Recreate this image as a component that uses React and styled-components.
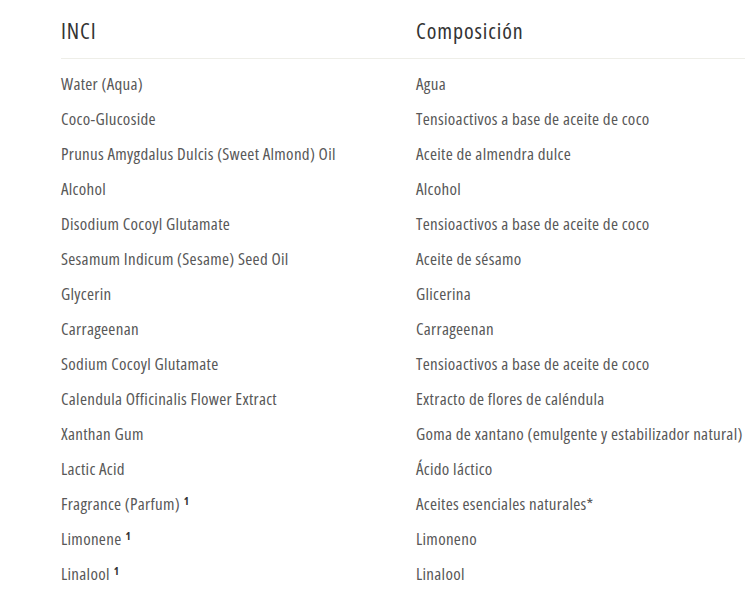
import React from 'react';
import styled, { createGlobalStyle } from 'styled-components';

const rows = [
    { inci: 'Water (Aqua)', comp: 'Agua' },
    { inci: 'Coco-Glucoside', comp: 'Tensioactivos a base de aceite de coco' },
    { inci: 'Prunus Amygdalus Dulcis (Sweet Almond) Oil', comp: 'Aceite de almendra dulce' },
    { inci: 'Alcohol', comp: 'Alcohol' },
    { inci: 'Disodium Cocoyl Glutamate', comp: 'Tensioactivos a base de aceite de coco' },
    { inci: 'Sesamum Indicum (Sesame) Seed Oil', comp: 'Aceite de sésamo' },
    { inci: 'Glycerin', comp: 'Glicerina' },
    { inci: 'Carrageenan', comp: 'Carrageenan' },
    { inci: 'Sodium Cocoyl Glutamate', comp: 'Tensioactivos a base de aceite de coco' },
    { inci: 'Calendula Officinalis Flower Extract', comp: 'Extracto de flores de caléndula' },
    { inci: 'Xanthan Gum', comp: 'Goma de xantano (emulgente y estabilizador natural)' },
    { inci: 'Lactic Acid', comp: 'Ácido láctico' },
    { inci: 'Fragrance (Parfum)', note: '1', comp: 'Aceites esenciales naturales*' },
    { inci: 'Limonene', note: '1', comp: 'Limoneno' },
    { inci: 'Linalool', note: '1', comp: 'Linalool' },
];

const GlobalStyle = createGlobalStyle`
  body {
    margin: 0;
    background: #fff;
    font-family: "Open Sans", "Liberation Sans", Arial, sans-serif;
    font-stretch: condensed;
  }
`;

const Page = styled.div`
  padding: 13px 10px 0 61px;
`;

const Table = styled.table`
  width: 684px;
  border-collapse: collapse;
  table-layout: fixed;
`;

const HeadCell = styled.th`
  text-align: left;
  font-weight: normal;
  font-size: 22px;
  letter-spacing: 0.9px;
  line-height: 26px;
  color: #333;
  padding: 4px 0 15px;
  border-bottom: 1px solid #eeeee8;
  width: ${(props) => props.width || 'auto'};
`;

const Row = styled.tr`
  &:first-child td {
    padding-top: 15px;
  }
`;

const Cell = styled.td`
  font-size: 17px;
  letter-spacing: 0.3px;
  line-height: 19px;
  color: #585858;
  padding: 8px 0;
  white-space: nowrap;
`;

const Note = styled.sup`
  font-size: 11px;
  font-weight: bold;
  color: #333;
  margin-left: 4px;
  vertical-align: 5px;
  line-height: 0;
`;

const App = () => (
    <Page>
        <GlobalStyle />
        <Table>
            <thead>
                <tr>
                    <HeadCell width="355px">INCI</HeadCell>
                    <HeadCell>Composición</HeadCell>
                </tr>
            </thead>
            <tbody>
                {rows.map((row, index) => (
                    <Row key={index}>
                        <Cell>
                            {row.inci}
                            {row.note && <Note>{row.note}</Note>}
                        </Cell>
                        <Cell>{row.comp}</Cell>
                    </Row>
                ))}
            </tbody>
        </Table>
    </Page>
);

export default App;
